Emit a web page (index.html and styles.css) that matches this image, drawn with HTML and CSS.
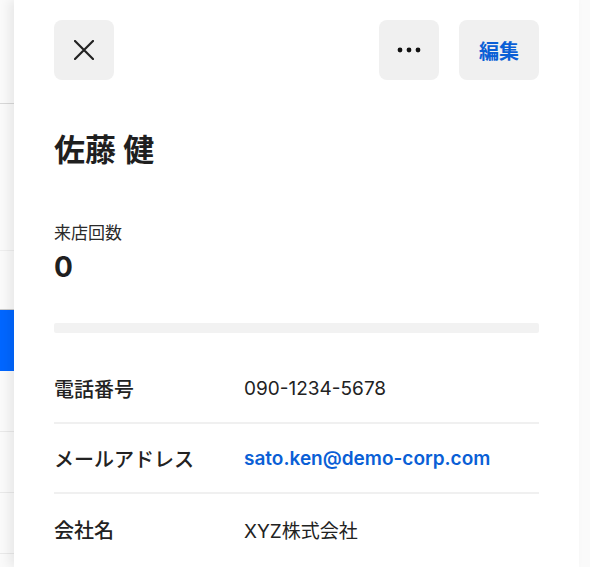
FILE: index.html
```html
<!DOCTYPE html>
<html lang="ja">
<head>
<meta charset="UTF-8">
<meta name="viewport" content="width=device-width, initial-scale=1.0">
<title>顧客詳細</title>
<link rel="stylesheet" href="styles.css">
</head>
<body>
<div class="app">
	<!-- 背面の一覧（ドロワーの左に少しだけ見える） -->
	<div class="behind">
		<div class="behind-row head"></div>
		<div class="behind-row filter"></div>
		<div class="behind-row gap"></div>
		<div class="behind-row active"></div>
		<div class="behind-row"></div>
		<div class="behind-row"></div>
		<div class="behind-row"></div>
	</div>

	<div class="drawer">
		<div class="drawer-head">
			<button class="icon-btn" aria-label="閉じる">
				<svg width="20" height="20" viewBox="0 0 20 20"><path d="M1 1L19 19M19 1L1 19" stroke="#222" stroke-width="2.2" stroke-linecap="round" fill="none"/></svg>
			</button>
			<div class="head-actions">
				<button class="icon-btn" aria-label="その他">
					<svg width="24" height="6" viewBox="0 0 24 6"><circle cx="3" cy="3" r="2.4" fill="#111"/><circle cx="12" cy="3" r="2.4" fill="#111"/><circle cx="21" cy="3" r="2.4" fill="#111"/></svg>
				</button>
				<button class="text-btn">編集</button>
			</div>
		</div>

		<h1 class="customer-name">佐藤 健</h1>

		<div class="stat">
			<div class="stat-label">来店回数</div>
			<div class="stat-value">0</div>
		</div>

		<div class="separator"></div>

		<dl class="info">
			<div class="info-row">
				<dt>電話番号</dt>
				<dd>090-1234-5678</dd>
			</div>
			<div class="info-row">
				<dt>メールアドレス</dt>
				<dd><a href="#">sato.ken@demo-corp.com</a></dd>
			</div>
			<div class="info-row">
				<dt>会社名</dt>
				<dd>XYZ株式会社</dd>
			</div>
		</dl>
	</div>

	<div class="track"></div>
</div>
</body>
</html>
```

FILE: styles.css
```css
html, body {
	margin: 0;
	padding: 0;
	height: 100%;
	overflow: hidden;
}
body {
	font-family: Inter, "Noto Sans CJK JP", sans-serif;
	color: #1f1f1f;
	background: #fff;
}
.app {
	display: flex;
	height: 567px;
}

/* 背面の一覧 */
.behind {
	width: 14px;
	flex-shrink: 0;
	display: flex;
	flex-direction: column;
	background: #fafafa;
}
.behind-row {
	height: 60px;
	border-bottom: 1px solid #e9e9e9;
}
.behind-row.head {
	height: 103px;
	border-bottom-color: #d8d8d8;
}
.behind-row.filter {
	height: 146px;
	border-bottom-color: #eeeeee;
}
.behind-row.gap {
	height: 58px;
	border-bottom-color: #c9c9c9;
}
.behind-row.active {
	height: 61px;
	background: #0066ff;
	border-bottom: none;
}

/* ドロワー */
.drawer {
	width: 565px;
	flex-shrink: 0;
	padding: 20px 40px;
	box-sizing: border-box;
	background: #fff;
	box-shadow: -5px 0 10px rgba(0, 0, 0, 0.07);
	position: relative;
	z-index: 1;
}
.drawer-head {
	display: flex;
	justify-content: space-between;
	align-items: center;
}
.head-actions {
	display: flex;
	gap: 20px;
}
.icon-btn, .text-btn {
	height: 60px;
	border: none;
	border-radius: 8px;
	background: #f0f0f0;
	display: flex;
	align-items: center;
	justify-content: center;
	padding: 0;
	cursor: pointer;
}
.icon-btn {
	width: 60px;
}
.text-btn {
	width: 80px;
	font-family: inherit;
	font-size: 20px;
	font-weight: 700;
	color: #0a5fd6;
}

.customer-name {
	margin: 50px 0 0;
	font-size: 31px;
	line-height: 40px;
	font-weight: 700;
}

.stat {
	margin-top: 51px;
}
.stat-label {
	font-size: 17px;
	line-height: 24px;
	color: #2a2a2a;
}
.stat-value {
	margin-top: 5px;
	font-size: 28px;
	line-height: 34px;
	font-weight: 700;
}

.separator {
	margin-top: 39px;
	height: 10px;
	border-radius: 2px;
	background: #f2f2f2;
}

.info {
	margin: 21px 0 0;
}
.info-row {
	display: flex;
	align-items: center;
	height: 70px;
	border-bottom: 2px solid #f0f0f0;
	box-sizing: border-box;
}
.info-row:last-child {
	border-bottom: none;
}
.info-row dt {
	width: 190px;
	font-size: 20px;
	font-weight: 500;
	color: #222;
}
.info-row dd {
	margin: 0;
	font-size: 19px;
	color: #222;
}
.info-row a {
	color: #0a5fd6;
	font-weight: 600;
	text-decoration: none;
}

.track {
	flex: 1;
	background: #fafafa;
}
```
